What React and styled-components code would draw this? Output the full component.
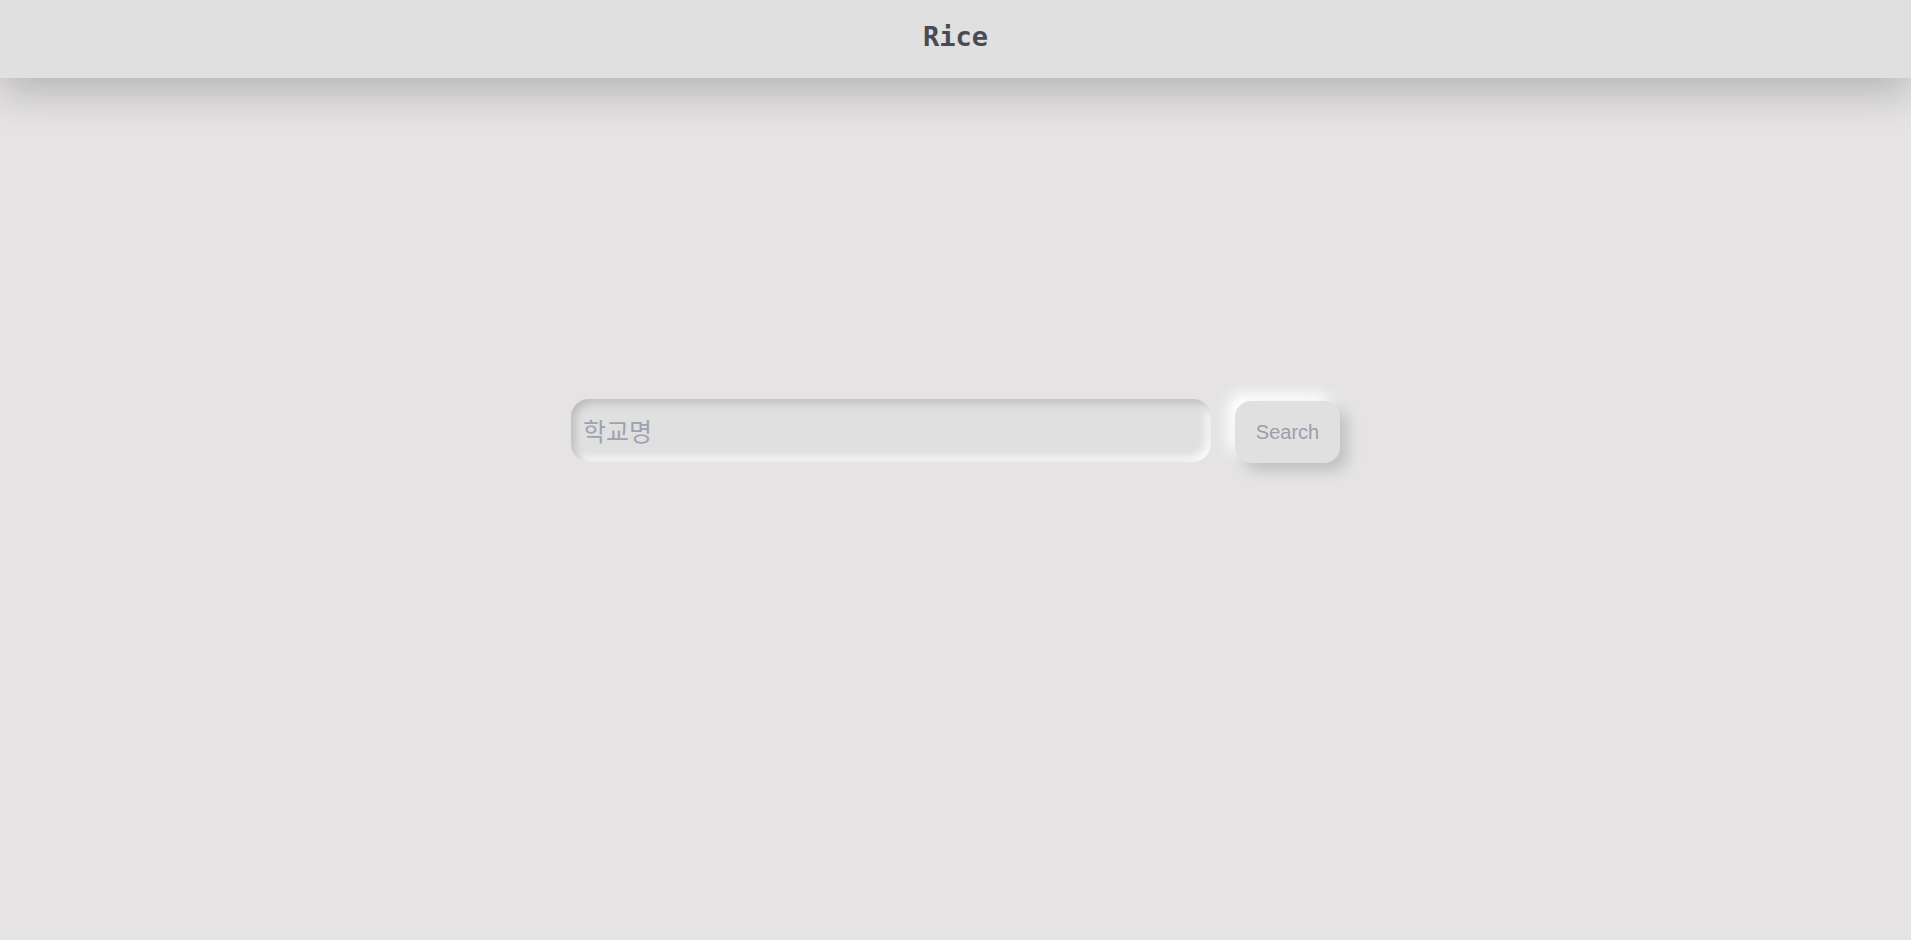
import React, { useState } from "react";
import styled, { createGlobalStyle } from "styled-components";

const GlobalStyle = createGlobalStyle`
  html, body {
    margin: 0;
    padding: 0;
    background-color: #e5e3e4;
    font-family: "Liberation Sans", Arial, sans-serif;
    min-height: 100vh;
    overflow: hidden;
  }
  * {
    box-sizing: border-box;
  }
`;

const Page = styled.div`
  min-height: 100vh;
  display: flex;
  flex-direction: column;
`;

const Header = styled.header`
  height: 78px;
  background-color: #e0e0e0;
  display: flex;
  align-items: center;
  justify-content: center;
  box-shadow: 0 16px 40px rgba(0, 0, 0, 0.2);
  position: relative;
  z-index: 1;
`;

const Title = styled.h1`
  margin: 0 0 6px 0;
  font-family: "DejaVu Sans Mono", "Liberation Mono", monospace;
  font-weight: bold;
  font-size: 27px;
  color: #4a4a55;
`;

const Main = styled.main`
  flex: 1;
  display: flex;
  justify-content: center;
  padding-top: 319px;
`;

const SearchRow = styled.form`
  display: flex;
  align-items: center;
  gap: 24px;
  height: 66px;
`;

const SearchInput = styled.input`
  width: 640px;
  height: 63px;
  border: none;
  outline: none;
  border-radius: 18px;
  padding: 0 12px;
  background-color: #e0e0e0;
  font-family: "Noto Sans CJK KR", "Noto Sans", sans-serif;
  font-size: 25px;
  color: #4a4a55;
  box-shadow: inset 4px 4px 8px #bcbcbc, inset -4px -4px 8px #ffffff;

  &::placeholder {
    color: #9da3b3;
  }
`;

const SearchButton = styled.button`
  width: 105px;
  height: 62px;
  margin-top: 4px;
  border: none;
  border-radius: 16px;
  background-color: #e0e0e0;
  font-family: "Liberation Sans", Arial, sans-serif;
  font-size: 20px;
  color: #9a9eab;
  cursor: pointer;
  box-shadow: 8px 8px 14px #c2c2c2, -8px -8px 14px #ffffff;
`;

const App = () => {
  const [query, setQuery] = useState("");

  return (
    <>
      <GlobalStyle />
      <Page>
        <Header>
          <Title>Rice</Title>
        </Header>
        <Main>
          <SearchRow onSubmit={(e) => e.preventDefault()}>
            <SearchInput
              placeholder="학교명"
              value={query}
              onChange={(e) => setQuery(e.target.value)}
            />
            <SearchButton type="submit">Search</SearchButton>
          </SearchRow>
        </Main>
      </Page>
    </>
  );
};

export default App;
